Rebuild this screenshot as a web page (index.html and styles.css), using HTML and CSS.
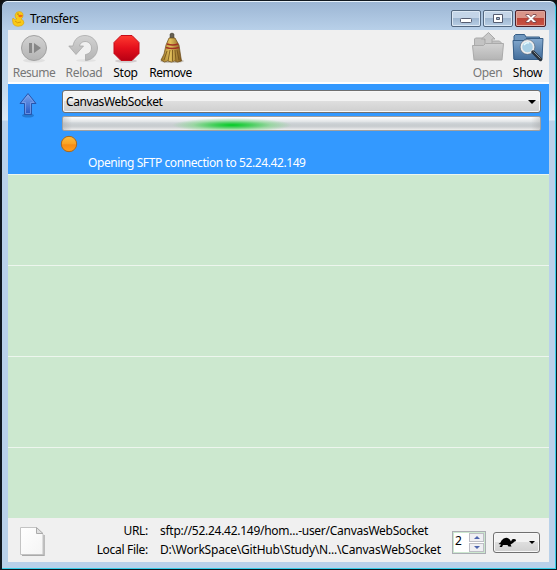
FILE: index.html
```html
<!DOCTYPE html>
<html lang="en">
<head>
<meta charset="utf-8">
<title>Transfers</title>
<link rel="stylesheet" href="styles.css">
</head>
<body>
<svg width="0" height="0" class="defs">
<defs>
<linearGradient id="gray" x2="0" y2="1"><stop stop-color="#d2d2d2"/><stop offset="1" stop-color="#b4b4b4"/></linearGradient>
<linearGradient id="red" x2="0" y2="1"><stop stop-color="#ff3b30"/><stop offset=".5" stop-color="#e5101c"/><stop offset="1" stop-color="#b80014"/></linearGradient>
<linearGradient id="straw" x2="1" y2="0"><stop stop-color="#9a7428"/><stop offset=".45" stop-color="#e2c05c"/><stop offset="1" stop-color="#80581c"/></linearGradient>
<linearGradient id="folder" x2="0" y2="1"><stop stop-color="#86abd0"/><stop offset="1" stop-color="#426d9b"/></linearGradient>
<linearGradient id="arrow" x2="0" y2="1"><stop stop-color="#7ba5ef"/><stop offset="1" stop-color="#2456c3"/></linearGradient>
<linearGradient id="orange" x2="0" y2="1"><stop stop-color="#ffbd3d"/><stop offset=".5" stop-color="#f9a222"/><stop offset=".55" stop-color="#f78c14"/><stop offset="1" stop-color="#ff9f1c"/></linearGradient>
<linearGradient id="paper" x2="1" y2="1"><stop stop-color="#fff"/><stop offset="1" stop-color="#f4f4f4"/></linearGradient>
</defs>
</svg>
<div class="window">
  <header class="titlebar">
    <svg class="duck" width="14" height="16" viewBox="0 0 14 16"><path d="M3 4Q4 .5 7.500.6Q11.500 1 11 5Q10.800 7 9 8Q12 9 12 12Q11 15.500 6 15.300Q1 15 .8 11Q0 8 1 7Q2 9 5 8Q3 7 3 4Z" fill="#f9c916" stroke="#d9a10d" stroke-width=".6"/><path d="M6 4.500Q8 3 11 4.500Q10 7 7 6Z" fill="#ef6b18"/><path d="M3 10Q5 13 9 11" fill="none" stroke="#d79a0c"/><circle cx="6" cy="3" r=".6" fill="#553c10"/></svg>
    <span class="title">Transfers</span>
    <div class="controls">
      <span class="control"><svg width="30" height="15"><rect x="9.500" y="7.500" width="11" height="4" rx="1" fill="#fff" stroke="#555c70"/></svg></span>
      <span class="control"><svg width="30" height="15"><path d="M10.500 3.500h9v8h-9zM13.500 6.500h3v2h-3z" fill="#fff" fill-rule="evenodd" stroke="#555c70"/></svg></span>
      <span class="control close"><svg width="30" height="15"><path d="M10 3.500h3l2 2.200 2-2.200h3v1l-3 3 3 3v1h-3l-2-2.200-2 2.200h-3v-1l3-3-3-3z" fill="#fff" stroke="#6b3940" stroke-width=".8"/></svg></span>
    </div>
  </header>
  <main class="client">
    <nav class="toolbar">
      <div class="tool disabled"><svg width="32" height="32" viewBox="0 0 32 32"><ellipse cx="16" cy="28.500" rx="11" ry="2" fill="#e0e0e0"/><circle cx="16" cy="16" r="12.500" fill="url(#gray)" stroke="#a2a2a2"/><path d="M11 11h3v10h-3zM16 11l7 5-7 5z" fill="#878787"/></svg><span class="resume">Resume</span></div>
      <div class="tool disabled"><svg width="32" height="32" viewBox="0 0 32 32"><ellipse cx="18" cy="28.500" rx="10" ry="1.500" fill="#e2e2e2"/><path d="M5 14C6 7 11 3.500 17 3.500C24 3.500 29.500 9 29.500 16C29.500 23 24 28.200 17.500 28.500V22.500C21 22 23.500 19.500 23.500 16C23.500 12 20.500 9.500 17 9.500C14 9.500 12 11.500 11.500 14H15.500L8 22.500L.8 14Z" fill="url(#gray)" stroke="#a2a2a2" stroke-width=".7"/></svg><span>Reload</span></div>
      <div class="tool"><svg width="32" height="32" viewBox="0 0 32 32"><ellipse cx="16" cy="29" rx="11" ry="1.700" fill="#d3cdce"/><path d="M11 3.500h11l7 7v11l-7 7H11l-7-7v-11z" fill="url(#red)" stroke="#c60b18"/></svg><span>Stop</span></div>
      <div class="tool"><svg width="32" height="32" viewBox="0 0 32 32"><ellipse cx="17" cy="29" rx="12" ry="2" fill="#c8c4bb"/><path d="M15 2q2-2 4 0v6h-4z" fill="#666052" stroke="#46423a" stroke-width=".5"/><path d="M14 6h6l4 7 1.500 10 1 6-4 1-3-1-3 1-4-1-3 1-3.500-2 3-6 2-9z" fill="url(#straw)" stroke="#694717" stroke-width=".7"/><path d="M12 19L9 28M15 18L13 29M17.500 18V29M20 18L21 29M22 18L24 28" fill="none" stroke="#715018" stroke-width=".8"/><path d="M12 12q6 2 11 0M11 15.500q6 2 13 0" fill="none" stroke="#a13125" stroke-width="1.400"/></svg><span class="remove">Remove</span></div>
      <i></i>
      <div class="tool disabled"><svg width="32" height="32" viewBox="0 0 32 32"><path d="M2.500 14V7l1-1h8l2 3h14l2 2v4" fill="#c3c3c3" stroke="#aaa"/><path d="M13 14V7H9.500L16.500.5 23 7h-3v8z" fill="#c9c9c9" stroke="#a8a8a8"/><path d="M.5 13.500h11l2-2h18l-1.500 16.500H2z" fill="url(#gray)" stroke="#aaa"/></svg><span>Open</span></div>
      <div class="tool"><svg width="32" height="32" viewBox="0 0 32 32"><path d="M2 27V4l1.500-1.500h9L14 5h13.500v6z" fill="#7198bf" stroke="#365e87"/><path d="M1 8.500h11l2-2h17l-1 21H2z" fill="url(#folder)" stroke="#385f88"/><circle cx="15.500" cy="15" r="6.300" fill="#a9d0e5" stroke="#eee" stroke-width="2"/><circle cx="15.500" cy="15" r="7.400" fill="none" stroke="#526270" stroke-width=".6"/><path d="M12 13q2-3 5-2" fill="none" stroke="#e5fbff" stroke-width="1.500"/><path d="M21 20l7.500 7.500" stroke="#29333d" stroke-width="3.500" stroke-linecap="round"/><path d="M21.500 19.500l7 7" stroke="#8b969e"/></svg><span>Show</span></div>
    </nav>
    <section class="list">
      <article class="transfer">
        <svg class="upload" width="20" height="26" viewBox="0 0 20 26"><ellipse cx="10" cy="23.500" rx="6" ry="2" fill="#2279d3"/><path d="M10 1.500L18 11.500H13.500V22.500H6.500V11.500H2Z" fill="url(#arrow)" stroke="#2855ab" stroke-linejoin="round"/><path d="M10 3.300L15.800 10.500H12.500V21.500H7.500V10.500H4.200Z" fill="none" stroke="#82a8ee" stroke-width=".7"/></svg>
        <div class="details">
          <div class="combo"><span>CanvasWebSocket</span><svg width="8" height="4"><path d="M0 0h8L4 4z"/></svg></div>
          <div class="progress"><div class="glow"></div></div>
          <svg class="dot" width="18" height="18"><circle cx="9" cy="9" r="7.700" fill="url(#orange)" stroke="#a4671f"/></svg>
          <p class="status">Opening SFTP connection to 52.24.42.149</p>
        </div>
      </article>
      <div class="row"></div><div class="row"></div><div class="row"></div><div class="row last"></div>
    </section>
    <footer class="footer">
      <svg class="file" width="25" height="29"><path d="M2 28.500h22V8" fill="none" stroke="#aaa" stroke-width="1.500"/><path d="M.5.5h16l6.500 6.500v20.500H.5z" fill="url(#paper)" stroke="#c3c3c3"/><path d="M16.500.5v6h6.500z" fill="#e0e0e0" stroke="#aaa"/></svg>
      <dl class="info"><dt class="url-label">URL:</dt><dd class="url">sftp://52.24.42.149/hom...-user/CanvasWebSocket</dd><dt>Local File:</dt><dd class="path">D:\WorkSpace\GitHub\Study\N...\CanvasWebSocket</dd></dl>
      <div class="spinner"><span>2</span><div class="steps"><b><svg width="6" height="3"><path d="M0 3h6L3 0z" fill="#4e65ae"/></svg></b><b><svg width="6" height="3"><path d="M0 0h6L3 3z" fill="#4e65ae"/></svg></b></div></div>
      <div class="speed"><svg width="19" height="11" viewBox="0 0 19 11"><path d="M.5 7Q3 5.500 3.500 3.500Q6 .2 9.500 1Q12 2 13 4.500L14 2.500Q15 1.500 17.500 2.300L18 4Q16 4.500 15 6L12.500 7.500L13.500 9.500H10.500L9.500 8H5L4 10H1.500L3 7.500Z"/></svg><svg width="6" height="3"><path d="M0 0h6L3 3z"/></svg></div>
    </footer>
  </main>
</div>
</body>
</html>
```
FILE: styles.css
```css
* { box-sizing: border-box; }
body { margin: 0; width: 557px; height: 570px; overflow: hidden; background: #111; font: 12px/16px "Noto Sans", sans-serif; color: #000; }
svg { display: block; flex-shrink: 0; }
.defs { position: absolute; }
.window { height: 570px; padding: 0 6px 6px; border: 1px solid #101820; border-left-width: 2px; border-radius: 7px 7px 0 0; background: linear-gradient(#9bb5d3, #b8d0e9 29px, #c5dbef 90px, #dae8f5 119px, #b9d1ea 120px); box-shadow: inset -1px -1px #35cde8, inset 0 1px #e6f1fa; }
.titlebar { height: 29px; display: flex; padding-left: 4px; }
.duck { margin-top: 10px; }
.title { margin: 10px 0 0 4px; letter-spacing: -.42px; }
.controls { display: flex; gap: 2px; margin: 9px 4px 0 auto; height: 17px; }
.control { width: 30px; border: 1px solid #53677f; border-radius: 2px; box-shadow: inset 0 0 0 1px #dce8f4; background: linear-gradient(#c4d5e8 48%, #9fb7d1 50%, #b8cee4); display: flex; justify-content: center; }
.close { width: 31px; border-color: #4c2029; background: linear-gradient(#d99589 48%, #bd4538 50%, #c95345); box-shadow: inset 0 0 0 1px #dfa69e; }
.client { width: 541px; height: 532px; background: #f0f0f0; }
.toolbar { height: 54px; padding: 2px 2px 0 3px; display: grid; grid-template-columns: 46px 54px 29px 61px 1fr 41px 39px; border-bottom: 2px solid #fff; letter-spacing: -.3px; }
.tool { display: flex; flex-direction: column; align-items: center; white-space: nowrap; }
.tool span { margin-top: 1px; }
.disabled { color: #777; }
.resume, .remove { letter-spacing: -.45px; }
.list { height: 434px; background: #cce8cf; }
.transfer { height: 91px; border-bottom: 1px solid #edf6ee; background: #3399ff; display: flex; padding: 6px 8px 0 10px; }
.upload { margin-top: 2px; }
.details { width: 479px; margin-left: 24px; }
.combo { height: 23px; border: 1px solid #707070; border-radius: 3px; background: linear-gradient(#f3f3f3 48%, #dedede 50%, #cfcfcf); box-shadow: inset 0 0 0 1px #f8f8f8; display: flex; align-items: center; justify-content: space-between; padding: 0 4px 0 3px; letter-spacing: -.4px; }
.progress { height: 15px; margin-top: 3px; border: 1px solid #a0a0a0; border-radius: 2px; background: linear-gradient(90deg, #9995, transparent 9px, transparent 468px, #9995), linear-gradient(#fff, #e2e5e7 35%, #d0d5d9 45%, #c7cccf 62%, #cbcfd2 75%, #eee); overflow: hidden; }
.glow { width: 120px; height: 13px; margin-left: 109px; background: radial-gradient(ellipse 60px 7px at 50% 62%, #00cb23, #21cf3bcc 30%, #72dc7b88 65%, transparent); }
.dot { margin: 4px 0 0 -2px; }
.status { margin: 2px 0 0 26px; color: #fff; letter-spacing: -.41px; }
.row { height: 91px; border-bottom: 1px solid #edf6ee; }
.last { height: 70px; border: 0; }
.footer { height: 44px; display: flex; padding-left: 12px; }
.file { margin-top: 9px; }
.info { width: 399px; margin: 5px 0 0; display: grid; grid-template-columns: 103px 1fr; grid-template-rows: 19px 19px; column-gap: 12px; white-space: nowrap; }
.info dt { text-align: right; letter-spacing: -.3px; }
.info dd { margin: 0; }
.url { letter-spacing: -.27px; }
.path { letter-spacing: -.2px; }
.spinner { width: 34px; height: 23px; margin: 13px 0 0 8px; border: 1px solid #abadb3; background: #fff; box-shadow: inset 0 0 0 1px #cce8cf; display: flex; justify-content: space-between; padding: 1px; }
.spinner span { margin-left: 1px; }
.steps { display: grid; grid-template-rows: 1fr 1fr; width: 15px; gap: 1px; }
.steps b { border: 1px solid #bdbdc5; background: #efeff3; display: grid; place-items: center; }
.speed { width: 47px; height: 21px; margin: 14px 0 0 7px; border: 1px solid #707070; border-radius: 3px; background: linear-gradient(#f2f2f2 48%, #dedede 50%, #d0d0d0); box-shadow: inset 0 0 0 1px #f8f8f8; display: flex; align-items: center; justify-content: space-between; padding: 0 4px; }
```
